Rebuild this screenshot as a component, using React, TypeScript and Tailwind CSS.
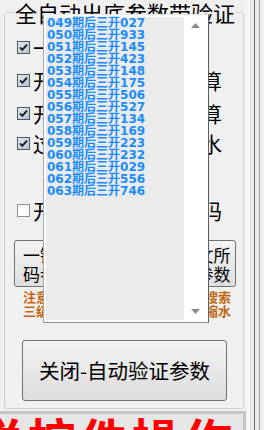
import React from 'react';

const items = [
  '049期后三开027',
  '050期后三开933',
  '051期后三开145',
  '052期后三开423',
  '053期后三开148',
  '054期后三开175',
  '055期后三开506',
  '056期后三开527',
  '057期后三开134',
  '058期后三开169',
  '059期后三开223',
  '060期后三开232',
  '061期后三开029',
  '062期后三开556',
  '063期后三开746',
];

const cjk = "font-['Noto_Sans_CJK_SC',sans-serif]";

const Check = ({ checked }: { checked: boolean }) => (
  <svg width="13" height="13" viewBox="0 0 13 13" className="shrink-0">
    <defs>
      <linearGradient id="cbg" x1="0" y1="0" x2="1" y2="1">
        <stop offset="0" stopColor="#e4ebf2" />
        <stop offset="1" stopColor="#b4c2d0" />
      </linearGradient>
    </defs>
    <rect x="0.5" y="0.5" width="12" height="12" fill={checked ? 'url(#cbg)' : '#fbfbfb'} stroke={checked ? '#4d5965' : '#8f8f8f'} />
    {checked && <path d="M3 6.4 L5.3 8.8 L10 3.6" fill="none" stroke="#1c1c1c" strokeWidth="1.9" />}
  </svg>
);

const Row = ({ checked, label, className }: { checked: boolean; label: string; className: string }) => (
  <div className={`flex h-[24px] items-center gap-[3px] pl-[12px] ${className}`}>
    <Check checked={checked} />
    <span className={`${cjk} whitespace-nowrap text-[21px] leading-[24px] text-black`}>{label}</span>
  </div>
);

const Btn = ({ lines, className }: { lines: string[]; className: string }) => (
  <button
    type="button"
    className={`flex h-[47px] flex-col items-center justify-center rounded-[3px] border border-[#707070] bg-gradient-to-b from-[#f3f3f3] to-[#dedede] ${cjk} text-[17px] leading-[19px] text-black ${className}`}
  >
    {lines.map((l) => (
      <span key={l} className="whitespace-nowrap">
        {l}
      </span>
    ))}
  </button>
);

export default function App() {
  return (
    <div className="relative flex h-[430px] w-[264px] overflow-hidden bg-[#f0f0f0]">
      <div className="flex w-[246px] flex-col">
        <div className="h-[409px] pl-[4px]">
          <fieldset className="h-[409px] w-[240px] rounded-[3px] border border-[#cdd1d5]">
            <legend className={`ml-[10px] ${cjk} text-[22px] leading-[24px] text-black`}>全自动出底参数带验证</legend>
            <Row checked label="一键自动验证" className="mt-[11px]" />
            <Row checked label="开启自动出底再计算" className="mt-[9px]" />
            <Row checked label="开启验证后自动计算" className="mt-[9px]" />
            <Row checked label="过滤后自动带入缩水" className="mt-[6px]" />
            <Row checked={false} label="开启自动验证所有码" className="mt-[43px]" />
            <div className="mt-[18px] flex justify-between pl-[9px] pr-[7px]">
              <Btn lines={['一键验', '码参数']} className="w-[69px]" />
              <Btn lines={['全文所', '有参数']} className="w-[62px]" />
            </div>
            <div className={`mt-[3px] pl-[18px] ${cjk} text-[13px] font-bold leading-[14px] text-[#c26410]`}>
              <p className="whitespace-nowrap">注意：开启后将自动按条件进行搜索</p>
              <p className="whitespace-nowrap">三级验证的结果将会自动同步到缩水</p>
            </div>
            <div className="mt-[22px] pl-[17px]">
              <button
                type="button"
                className={`flex h-[61px] w-[205px] items-center justify-center rounded-[3px] border border-[#707070] bg-gradient-to-b from-[#f3f3f3] to-[#dcdcdc] ${cjk} text-[20.5px] text-black`}
              >
                关闭-自动验证参数
              </button>
            </div>
          </fieldset>
        </div>
        <div className="mt-[2px] flex-1 overflow-hidden border-t-[3px] border-r-[3px] border-[#c6c6c6] bg-[#e6e6e6]">
          <p className={`-ml-[24px] whitespace-nowrap ${cjk} text-[48px] font-bold leading-[48px] tracking-[4px] text-[#ff0000]`}>
            说按件操作
          </p>
        </div>
      </div>
      <div className="flex flex-1">
        <div className="w-[4px] bg-[#f4f4f4]" />
        <div className="w-[1px] bg-[#d8d8d8]" />
        <div className="w-[3px] bg-[#ececec]" />
        <div className="w-[1px] bg-[#6a6a6a]" />
        <div className="w-[4px] bg-[#ececec]" />
        <div className="w-[1px] bg-[#a0a0a0]" />
        <div className="flex-1 bg-[#f0f0f0]" />
      </div>

      <div className="absolute left-[43px] top-[14px] flex h-[309px] w-[166px] border border-l-[#a8a8a8] border-t-[#e8e8e8] border-r-[#5e5e5e] border-b-[#8c8c8c] bg-white p-[2px]">
        <div className="w-[138px] bg-[#ebebeb] font-['DejaVu_Sans','Noto_Sans_CJK_SC',sans-serif] text-[12px] font-bold leading-[12px] text-[#1a8cff]">
          {items.map((t) => (
            <div key={t} className="whitespace-nowrap pl-[1px]">
              {t}
            </div>
          ))}
        </div>
        <div className="flex flex-1 flex-col items-center justify-between py-[6px]">
          <svg width="9" height="5" viewBox="0 0 9 5">
            <path d="M0 5 L4.5 0 L9 5 Z" fill="#8a8a8a" />
          </svg>
          <svg width="9" height="5" viewBox="0 0 9 5">
            <path d="M0 0 L4.5 5 L9 0 Z" fill="#8a8a8a" />
          </svg>
        </div>
      </div>
    </div>
  );
}
